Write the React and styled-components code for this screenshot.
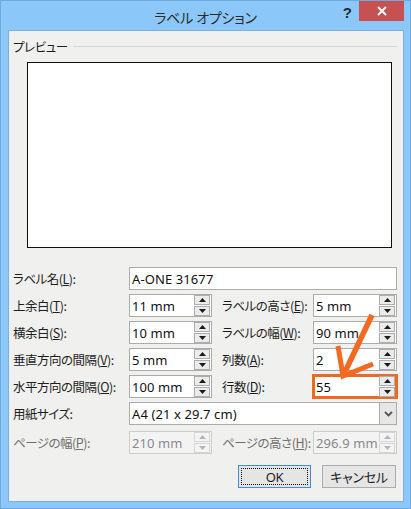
import React from "react";
import styled, { createGlobalStyle, css } from "styled-components";

const Global = createGlobalStyle`
  html, body { margin: 0; padding: 0; background: #8ac6f6; }
  body { font-family: "Noto Sans CJK JP", "Noto Sans", sans-serif; }
  * { box-sizing: border-box; }
`;

const Window = styled.div`
  position: relative;
  width: 411px;
  height: 509px;
  background: #8bc7f8;
  border: 1px solid #6fa9df;
  display: flex;
  flex-direction: column;
  font-family: "Noto Sans CJK JP", sans-serif;
  font-feature-settings: "palt";
  color: #1e1e1e;
`;

const TitleBar = styled.div`
  position: relative;
  height: 29px;
  flex: none;
  display: flex;
  align-items: center;
  justify-content: center;
`;

const Title = styled.div`
  font-size: 14px;
  letter-spacing: -0.2px;
  color: #2b2b2b;
  margin-top: 2px;
`;

const Help = styled.div`
  position: absolute;
  right: 58px;
  top: 3px;
  font-family: "Liberation Sans", sans-serif;
  font-weight: bold;
  font-size: 15px;
  color: #1e2a36;
`;

const Close = styled.div`
  position: absolute;
  right: 6px;
  top: 0;
  width: 45px;
  height: 20px;
  background: #c75050;
  display: flex;
  align-items: center;
  justify-content: center;
`;

const Client = styled.div`
  flex: 1;
  margin: 0 6px 6px 7px;
  background: #f0f0ee;
  border: 1px solid #79b0e2;
  padding: 8px 6px 0 4px;
  display: flex;
  flex-direction: column;
`;

const GroupHeader = styled.div`
  display: flex;
  align-items: center;
  height: 14px;
  font-size: 12.5px;
  letter-spacing: -0.4px;
  gap: 5px;
`;

const GroupLine = styled.div`
  flex: 1;
  height: 1px;
  background: #d7d7d5;
  margin-top: 1px;
`;

const PreviewBox = styled.div`
  margin: 9px 0 0 14px;
  width: 365px;
  height: 186px;
  background: #fff;
  border: 1px solid #101010;
`;

const Form = styled.div`
  margin-top: 19px;
  display: grid;
  grid-template-columns: 116px 83px 101px 84px;
  grid-auto-rows: 23px;
  row-gap: 4px;
  align-items: center;
`;

const Label = styled.div`
  font-size: 12.5px;
  letter-spacing: -0.5px;
  white-space: nowrap;
  padding-left: ${(p) => (p.$right ? "10px" : "0")};
  color: ${(p) => (p.$disabled ? "#6f6f6f" : "#1e1e1e")};
  ${(p) => p.$gapTop && css`margin-top: 4px;`}
  u { text-decoration: underline; text-underline-offset: 1px; }
`;

const Field = styled.div`
  position: relative;
  height: 23px;
  display: flex;
  align-items: center;
  background: ${(p) => (p.$disabled ? "#f3f3f3" : "#fff")};
  border: 1px solid ${(p) => (p.$disabled ? "#cdcdcd" : "#acacac")};
  grid-column: ${(p) => (p.$wide ? "2 / span 3" : "auto")};
  ${(p) => p.$gapTop && css`margin-top: 4px;`}
  ${(p) =>
    p.$highlight &&
    css`
      border-color: #ef6a21;
      box-shadow: inset 0 0 0 1px #ef6a21, 0 0 0 1px #ef6a21;
    `}
`;

const Value = styled.div`
  flex: 1;
  padding-left: 2px;
  font-family: "Noto Sans", "Noto Sans CJK JP", sans-serif;
  font-size: 13px;
  letter-spacing: 0.1px;
  color: ${(p) => (p.$disabled ? "#8a8a8a" : "#111")};
  white-space: nowrap;
  overflow: hidden;
`;

const Spin = styled.div`
  width: 16px;
  height: 21px;
  margin-right: 1px;
  display: flex;
  flex-direction: column;
  gap: 1px;
`;

const SpinBtn = styled.div`
  flex: 1;
  background: ${(p) => (p.$disabled ? "#f4f4f4" : "#ebebeb")};
  border: 1px solid ${(p) => (p.$disabled ? "#d6d6d6" : "#adadad")};
  display: flex;
  align-items: center;
  justify-content: center;
`;

const DropBtn = styled.div`
  width: 17px;
  height: 21px;
  background: #e6e6e6;
  border-left: 1px solid #acacac;
  display: flex;
  align-items: center;
  justify-content: center;
`;

const ButtonRow = styled.div`
  margin-top: 13px;
  display: flex;
  justify-content: flex-end;
  gap: 11px;
  padding-right: 1px;
`;

const Button = styled.div`
  width: ${(p) => (p.$w || 74)}px;
  height: 23px;
  display: flex;
  align-items: center;
  justify-content: center;
  font-family: "Noto Sans", "Noto Sans CJK JP", sans-serif;
  font-size: 13px;
  letter-spacing: -0.3px;
  background: #e5e5e5;
  border: 1px solid ${(p) => (p.$default ? "#3c8fe0" : "#acacac")};
  position: relative;
  ${(p) =>
    p.$default &&
    css`
      &::after {
        content: "";
        position: absolute;
        inset: 2px;
        border: 1px dotted #111;
      }
    `}
`;

const Overlay = styled.svg`
  position: absolute;
  left: -1px;
  top: -1px;
  pointer-events: none;
`;

const Tri = ({ up, disabled }) => (
  <svg width="7" height="4" viewBox="0 0 7 4">
    <polygon
      points={up ? "0,4 7,4 3.5,0" : "0,0 7,0 3.5,4"}
      fill={disabled ? "#b5b5b5" : "#1a1a1a"}
    />
  </svg>
);

const Spinner = ({ disabled }) => (
  <Spin>
    <SpinBtn $disabled={disabled}>
      <Tri up disabled={disabled} />
    </SpinBtn>
    <SpinBtn $disabled={disabled}>
      <Tri disabled={disabled} />
    </SpinBtn>
  </Spin>
);

const SpinField = ({ value, disabled, highlight, gapTop }) => (
  <Field $disabled={disabled} $highlight={highlight} $gapTop={gapTop}>
    <Value $disabled={disabled}>{value}</Value>
    <Spinner disabled={disabled} />
  </Field>
);

const L = ({ text, k, right, disabled, gapTop }) => (
  <Label $right={right} $disabled={disabled} $gapTop={gapTop}>
    {text}
    {k && (
      <>
        (<u>{k}</u>):
      </>
    )}
    {!k && ":"}
  </Label>
);

export default function App() {
  return (
    <>
      <Global />
      <Window>
        <TitleBar>
          <Title>ラベル オプション</Title>
          <Help>?</Help>
          <Close>
            <svg width="10" height="10" viewBox="0 0 10 10">
              <path d="M1 1 L9 9 M9 1 L1 9" stroke="#fff" strokeWidth="2" />
            </svg>
          </Close>
        </TitleBar>
        <Client>
          <GroupHeader>
            <span>プレビュー</span>
            <GroupLine />
          </GroupHeader>
          <PreviewBox />
          <Form>
            <L text="ラベル名" k="L" />
            <Field $wide>
              <Value>A-ONE 31677</Value>
            </Field>

            <L text="上余白" k="T" />
            <SpinField value="11 mm" />
            <L text="ラベルの高さ" k="E" right />
            <SpinField value="5 mm" />

            <L text="横余白" k="S" />
            <SpinField value="10 mm" />
            <L text="ラベルの幅" k="W" right />
            <SpinField value="90 mm" />

            <L text="垂直方向の間隔" k="V" />
            <SpinField value="5 mm" />
            <L text="列数" k="A" right />
            <SpinField value="2" />

            <L text="水平方向の間隔" k="O" />
            <SpinField value="100 mm" />
            <L text="行数" k="D" right />
            <SpinField value="55" highlight />

            <L text="用紙サイズ" />
            <Field $wide>
              <Value>A4 (21 x 29.7 cm)</Value>
              <DropBtn>
                <svg width="9" height="6" viewBox="0 0 9 6">
                  <path d="M1 1 L4.5 4.5 L8 1" stroke="#555" strokeWidth="1.8" fill="none" />
                </svg>
              </DropBtn>
            </Field>

            <L text="ページの幅" k="P" disabled gapTop />
            <SpinField value="210 mm" disabled gapTop />
            <L text="ページの高さ" k="H" right disabled gapTop />
            <SpinField value="296.9 mm" disabled gapTop />
          </Form>
          <ButtonRow>
            <Button $default $w={73}>OK</Button>
            <Button $w={74}>キャンセル</Button>
          </ButtonRow>
        </Client>
        <Overlay width="411" height="509" viewBox="0 0 411 509">
          <path d="M372 315 L344 374" stroke="#f26a21" strokeWidth="5.5" fill="none" />
          <path
            d="M338 346 L343 376 L373 364"
            stroke="#f26a21"
            strokeWidth="5"
            fill="none"
            strokeLinejoin="miter"
          />
        </Overlay>
      </Window>
    </>
  );
}
